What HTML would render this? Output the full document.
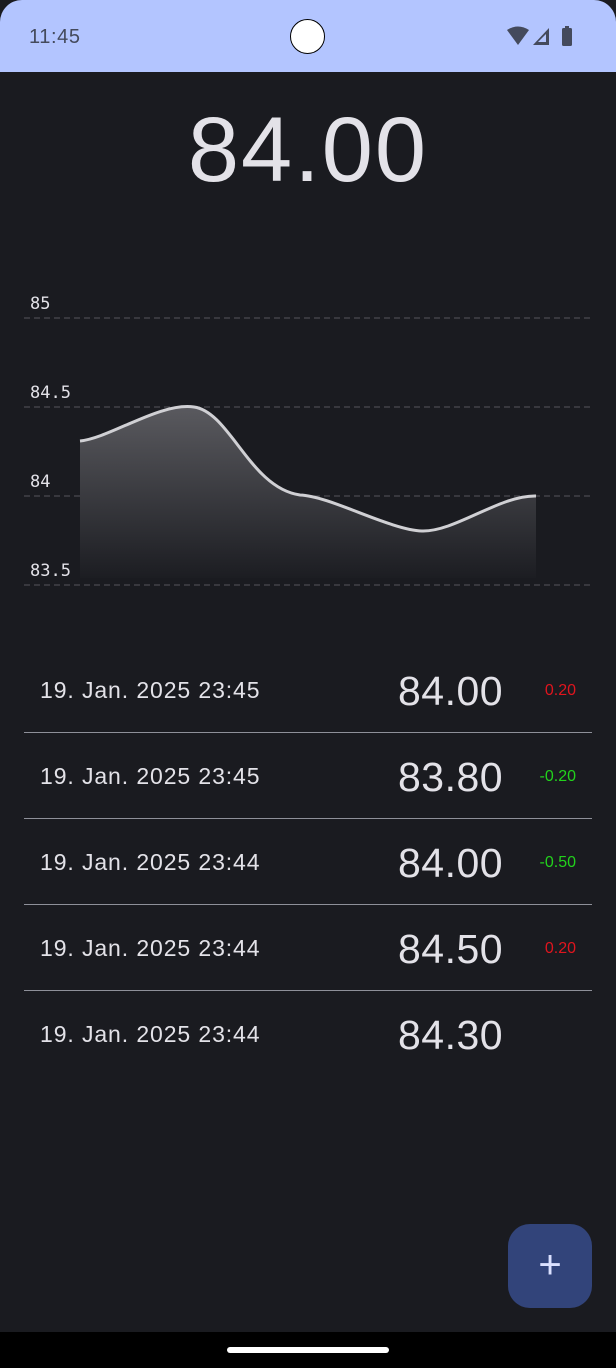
<!DOCTYPE html>
<html><head><meta charset="utf-8"><style>
body{margin:0;width:616px;height:1368px;background:#1a1b20;font-family:"Liberation Sans",sans-serif;position:relative;overflow:hidden}
.sb{position:absolute;left:0;top:0;width:616px;height:72px;background:#b3c5ff;border-radius:22px 22px 0 0}
.t{position:absolute;left:29px;top:26px;font-size:20px;color:#444a5c;letter-spacing:0.6px}
.cam{position:absolute;left:290px;top:19px;width:35px;height:35px;border-radius:50%;background:#fff;border:1.5px solid #000;box-sizing:border-box}
.big{position:absolute;left:0;width:616px;top:98px;text-align:center;font-size:92px;letter-spacing:2px;color:#e3e2e8}
.row{position:absolute;left:24px;width:568px;height:86px;border-bottom:1px solid #8e9099}
.d{position:absolute;left:16px;top:31px;font-size:23px;color:#e3e2e8;letter-spacing:0.9px}
.v{position:absolute;left:374px;top:22px;font-size:41px;letter-spacing:0.5px;color:#e3e2e8}
.c{position:absolute;right:16px;top:36px;font-size:16px}
.r{color:#e0151e}.g{color:#22d21c}
.fab{position:absolute;left:508px;top:1224px;width:84px;height:84px;border-radius:22px;background:#32447a;color:#dbe1ff;font-size:40px;text-align:center;line-height:82px}
.nav{position:absolute;left:0;top:1332px;width:616px;height:36px;background:#000}
.bar{position:absolute;left:227px;top:1347px;width:162px;height:6px;border-radius:3px;background:#fff}
</style></head><body>
<div class="sb"><div class="t">11:45</div><div class="cam"></div>
<svg style="position:absolute;left:505px;top:25px" width="72" height="22" viewBox="0 0 72 22"><path d="M2 5 Q13 -2 24 5 L13 20 Z" fill="#444a5c"/><path d="M44 3 V20 H28 Z M41 9 V17 H33 Z" fill="#444a5c" fill-rule="evenodd"/><rect x="57" y="3" width="10" height="18" rx="1.5" fill="#444a5c"/><rect x="60" y="1" width="4" height="3" fill="#444a5c"/></svg></div>
<div class="big">84.00</div>
<svg style="position:absolute;left:0;top:280px" width="616" height="320">
<defs><linearGradient id="gr" x1="0" y1="0" x2="0" y2="1"><stop offset="0" stop-color="#5a5a5f"/><stop offset="1" stop-color="#1c1d22"/></linearGradient></defs>
<g font-family="DejaVu Sans Mono,monospace" font-size="17" fill="#e3e2e8"><text x="30" y="29">85</text><text x="30" y="118">84.5</text><text x="30" y="207">84</text><text x="30" y="296">83.5</text></g>
<g stroke="#55565c" stroke-dasharray="6,4" stroke-width="1"><line x1="24" y1="38" x2="592" y2="38"/><line x1="24" y1="127" x2="592" y2="127"/><line x1="24" y1="216" x2="592" y2="216"/><line x1="24" y1="305" x2="592" y2="305"/></g>
<path d="M80 161 C110 158 160 122 194 127 C230 132 250 208 300 215 C330 216 390 250 422 251 C455 252 500 215 536 216 L536 298 L80 298 Z" fill="url(#gr)"/>
<path d="M80 161 C110 158 160 122 194 127 C230 132 250 208 300 215 C330 216 390 250 422 251 C455 252 500 215 536 216" fill="none" stroke="#d0d0d4" stroke-width="3"/>
</svg>
<div class="row" style="top:646px"><div class="d">19. Jan. 2025 23:45</div><div class="v">84.00</div><div class="c r">0.20</div></div>
<div class="row" style="top:732px"><div class="d">19. Jan. 2025 23:45</div><div class="v">83.80</div><div class="c g">-0.20</div></div>
<div class="row" style="top:818px"><div class="d">19. Jan. 2025 23:44</div><div class="v">84.00</div><div class="c g">-0.50</div></div>
<div class="row" style="top:904px"><div class="d">19. Jan. 2025 23:44</div><div class="v">84.50</div><div class="c r">0.20</div></div>
<div class="row" style="top:990px;border:none"><div class="d">19. Jan. 2025 23:44</div><div class="v">84.30</div></div>
<div class="fab">+</div>
<div class="nav"></div><div class="bar"></div>
</body></html>
